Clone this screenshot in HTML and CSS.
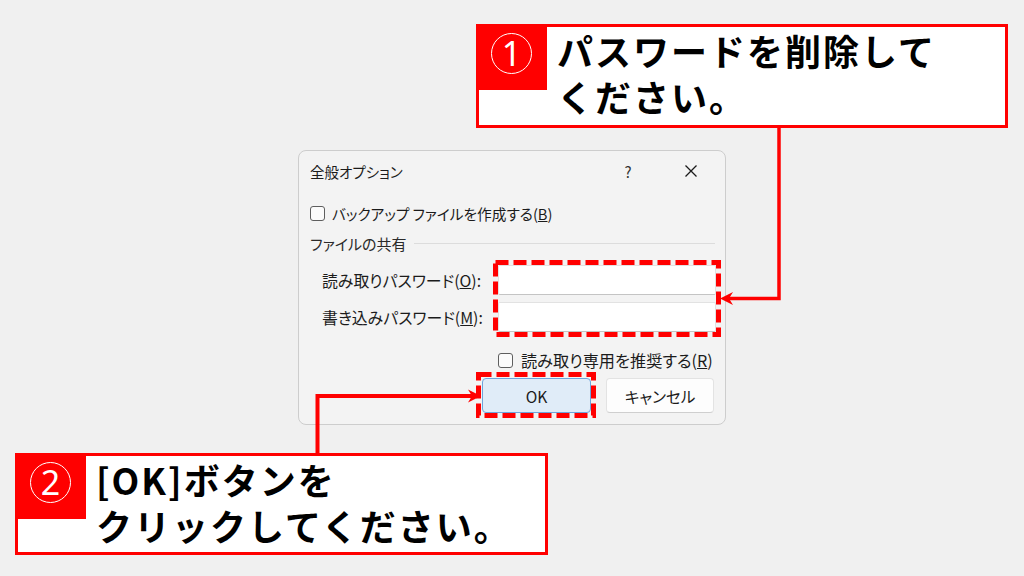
FILE: index.html
```html
<!DOCTYPE html>
<html lang="ja">
<head>
<meta charset="utf-8">
<title>全般オプション</title>
<link rel="stylesheet" href="styles.css">
</head>
<body>
<div class="canvas">
  <div class="dialog">
    <div class="titlebar">
      <span class="title">全般オプション</span>
      <span class="tb-btn help">?</span>
      <span class="tb-btn close"><svg width="14" height="14" viewBox="0 0 14 14"><path d="M1.5 1.5 L12.5 12.5 M12.5 1.5 L1.5 12.5" stroke="#1a1a1a" stroke-width="1.3" fill="none"/></svg></span>
    </div>
    <div class="dbody">
      <div class="check check-bk"><span class="cbox"></span><span>バックアップ ファイルを作成する(<u>B</u>)</span></div>
      <div class="group"><span>ファイルの共有</span><span class="rule"></span></div>
      <div class="pwgrid">
        <span class="lbl">読み取りパスワード(<u>O</u>):</span><span class="input"></span>
        <span class="lbl">書き込みパスワード(<u>M</u>):</span><span class="input"></span>
      </div>
      <div class="check check-ro"><span class="cbox"></span><span>読み取り専用を推奨する(<u>R</u>)</span></div>
      <div class="buttons">
        <span class="btn primary">OK</span>
        <span class="btn">キャンセル</span>
      </div>
    </div>
  </div>

  <svg class="overlay" width="1024" height="576" viewBox="0 0 1024 576">
    <rect x="495.5" y="262.5" width="223" height="72" fill="none" stroke="#ff0000" stroke-width="5" stroke-dasharray="13 5"/>
    <rect x="478.5" y="374.5" width="115" height="41" fill="none" stroke="#ff0000" stroke-width="5" stroke-dasharray="13 5"/>
    <polyline points="779,127 779,298.5 728,298.5" fill="none" stroke="#ff0000" stroke-width="3.5"/>
    <polygon points="720,298.5 733,292 729,298.5 733,305" fill="#ff0000"/>
    <polyline points="317.5,453 317.5,396 472,396" fill="none" stroke="#ff0000" stroke-width="4"/>
    <polygon points="481,396 468,389.5 472,396 468,402.5" fill="#ff0000"/>
  </svg>

  <div class="callout c1">
    <div class="num"><span class="circ">1</span></div>
    <div class="ctext"><div class="cline">パスワードを削除して</div><div class="cline">ください。</div></div>
  </div>
  <div class="callout c2">
    <div class="num"><span class="circ">2</span></div>
    <div class="ctext"><div class="cline">[OK]ボタンを</div><div class="cline">クリックしてください。</div></div>
  </div>
</div>
</body>
</html>
```

FILE: styles.css
```css
html, body {
  margin: 0;
  padding: 0;
}
body {
  background: #f0f0f0;
  font-family: "Noto Sans CJK JP", "Noto Sans", sans-serif;
}
.canvas {
  position: relative;
  width: 1024px;
  height: 576px;
  overflow: hidden;
  background: #f0f0f0;
}

/* dialog */
.dialog {
  position: absolute;
  left: 298px;
  top: 150px;
  width: 428px;
  height: 275px;
  box-sizing: border-box;
  border: 1px solid #cdcdcd;
  border-radius: 8px;
  background: #f3f3f3;
  color: #1b1b1b;
  font-size: 15px;
  font-feature-settings: "palt";
}
.titlebar {
  height: 40px;
  display: flex;
  align-items: center;
  padding-left: 11px;
  padding-right: 11px;
}
.title {
  flex: 1;
  font-size: 14.5px;
}
.tb-btn {
  width: 46px;
  height: 40px;
  display: flex;
  align-items: center;
  justify-content: center;
}
.help {
  font-size: 15px;
  color: #333;
  margin-right: 17px;
}
.dbody {
  padding: 0 9px 11px 11px;
  display: flex;
  flex-direction: column;
}
.check {
  height: 20px;
  display: flex;
  align-items: center;
  margin-top: 12px;
}
.check-bk {
  font-size: 14.7px;
}
.cbox {
  width: 13px;
  height: 13px;
  border: 1px solid #5e5e5e;
  border-radius: 3px;
  background: #fbfbfb;
  margin-right: 7px;
  flex: none;
}
.group {
  height: 20px;
  margin-top: 10px;
  display: flex;
  align-items: center;
  color: #2a2a2a;
}
.rule {
  flex: 1;
  height: 1px;
  background: #dcdcdc;
  margin-left: 8px;
  margin-right: 1px;
}
.pwgrid {
  margin-top: 12px;
  display: grid;
  grid-template-columns: 1fr 218px;
  grid-template-rows: 30px 30px;
  row-gap: 7px;
}
.lbl {
  padding-left: 12px;
  align-self: center;
  font-size: 15.9px;
}
.input {
  background: #ffffff;
  border: 1px solid #e2e2e2;
  border-bottom-color: #c4c4c4;
  border-radius: 2px;
}
.check-ro {
  margin-top: 18px;
  padding-left: 188px;
  font-size: 16.2px;
}
.check-ro .cbox {
  margin-right: 8px;
}
.buttons {
  margin-top: 8px;
  display: flex;
  justify-content: flex-end;
  gap: 15px;
  padding-right: 2px;
}
.btn {
  width: 108px;
  height: 35px;
  box-sizing: border-box;
  display: flex;
  align-items: center;
  justify-content: center;
  border: 1px solid #e3e3e3;
  border-bottom-color: #cfcfcf;
  border-radius: 4px;
  background: #fdfdfd;
  font-size: 15.6px;
}
.btn.primary {
  width: 109px;
  background: #e0ecf8;
  border: 1px solid #6ea4dc;
}

/* overlay */
.overlay {
  position: absolute;
  left: 0;
  top: 0;
  pointer-events: none;
}

/* callouts */
.callout {
  position: absolute;
  box-sizing: border-box;
  border: 3px solid #ff0000;
  background: #ffffff;
  display: flex;
  align-items: flex-start;
}
.c1 {
  left: 476px;
  top: 24px;
  width: 532px;
  height: 104px;
}
.c2 {
  left: 15px;
  top: 453px;
  width: 533px;
  height: 102px;
}
.num {
  width: 71px;
  height: 66px;
  flex: none;
  margin: -3px 0 0 -3px;
  background: #ff0000;
  display: flex;
  align-items: center;
  justify-content: center;
  padding-bottom: 8px;
  box-sizing: border-box;
}
.circ {
  width: 39px;
  height: 39px;
  border: 1.5px solid #ffffff;
  border-radius: 50%;
  display: flex;
  align-items: center;
  justify-content: center;
  color: #ffffff;
  font-family: "Noto Sans", "Noto Sans CJK JP", sans-serif;
  font-size: 34px;
  line-height: 1;
}
.ctext {
  padding-left: 10px;
  font-weight: 700;
  font-size: 36px;
  letter-spacing: 2px;
  color: #000000;
  white-space: nowrap;
}
.cline {
  height: 46px;
  line-height: 46px;
  overflow: visible;
}
```
